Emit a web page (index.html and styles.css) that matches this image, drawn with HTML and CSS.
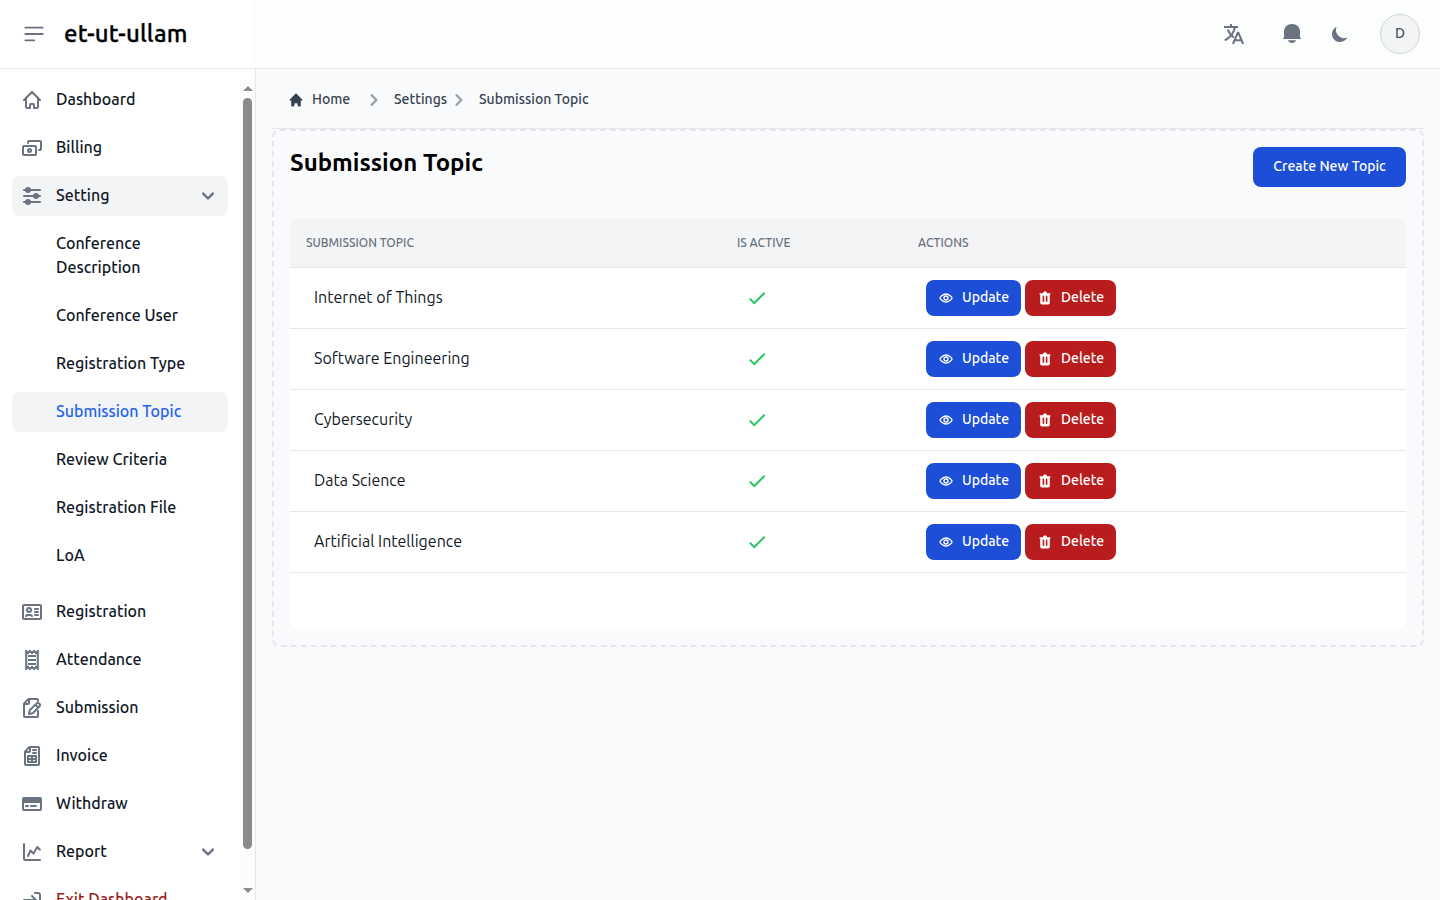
FILE: index.html
```html
<!DOCTYPE html>
<html lang="en">
<head>
    <meta charset="utf-8">
    <meta name="viewport" content="width=device-width, initial-scale=1.0">
    <title>Submission Topic</title>
    <link rel="stylesheet" href="styles.css">
</head>
<body>
    <nav class="navbar">
        <div class="brand">
            <button class="menu-button">
                <svg width="24" height="24" viewBox="0 0 20 20" fill="currentColor"><path fill-rule="evenodd" clip-rule="evenodd" d="M2 4.75A.75.75 0 012.75 4h14.5a.75.75 0 010 1.5H2.75A.75.75 0 012 4.75zm0 10.5a.75.75 0 01.75-.75h7.5a.75.75 0 010 1.5h-7.5a.75.75 0 01-.75-.75zM2 10a.75.75 0 01.75-.75h14.5a.75.75 0 010 1.5H2.75A.75.75 0 012 10z"/></svg>
            </button>
            <span class="brand-name">et-ut-ullam</span>
        </div>
        <div class="nav-actions">
            <svg class="icon-lang" width="20" height="20" viewBox="0 0 20 20" fill="none" stroke="currentColor" stroke-width="2"><path d="M0 3h14M7 0v3M11 3C10 8 6.500 13.500.7 16.300M3.800 5.500C5 9 7 11.500 9.700 13.300"/><path d="m8.900 20 4.800-11.200h.7L19.100 20M10.700 16.300h6.700"/></svg>
            <svg class="icon-bell" width="24" height="24" viewBox="0 0 24 24" fill="currentColor"><path d="M4 15.500V9.500C4 5 7.500 2 12 2s8 3 8 7.500v6c.6.300 1 .7 1 1.100 0 .3-.2.400-.5.400h-17c-.3 0-.5-.1-.5-.4 0-.4.4-.8 1-1.100zM8 18.200h8c-.6 1.800-2 2.800-4 2.800s-3.400-1-4-2.800z"/></svg>
            <svg class="icon-moon" width="20" height="20" viewBox="0 0 20 20" fill="currentColor"><path d="M17.293 13.293A8 8 0 016.707 2.707a8.001 8.001 0 1010.586 10.586z"/></svg>
            <div class="avatar">D</div>
        </div>
    </nav>

    <div class="layout">
        <aside class="sidebar">
            <ul class="menu">
                <li class="menu-item">
                    <svg viewBox="0 0 24 24" class="line"><path d="m4 12 8-8 8 8M6 10.500V19a1 1 0 0 0 1 1h3v-3a1 1 0 0 1 1-1h2a1 1 0 0 1 1 1v3h3a1 1 0 0 0 1-1v-8.500"/></svg>
                    <span>Dashboard</span>
                </li>
                <li class="menu-item">
                    <svg viewBox="0 0 24 24" class="line"><path d="M8 7V6a1 1 0 0 1 1-1h11a1 1 0 0 1 1 1v7a1 1 0 0 1-1 1h-1M3 18v-7a1 1 0 0 1 1-1h11a1 1 0 0 1 1 1v7a1 1 0 0 1-1 1H4a1 1 0 0 1-1-1Zm8-3.500a1.500 1.500 0 1 1-3 0 1.500 1.500 0 0 1 3 0Z"/></svg>
                    <span>Billing</span>
                </li>
                <li class="menu-item active">
                    <svg viewBox="0 0 24 24" class="line sliders"><path d="M4 6h16M4 12h16M4 18h16"/><circle cx="8" cy="6" r="2"/><circle cx="16" cy="12" r="2"/><circle cx="8" cy="18" r="2"/></svg>
                    <span>Setting</span>
                    <svg viewBox="0 0 20 20" class="caret"><path d="M5.293 7.293a1 1 0 011.414 0L10 10.586l3.293-3.293a1 1 0 111.414 1.414l-4 4a1 1 0 01-1.414 0l-4-4a1 1 0 010-1.414z"/></svg>
                </li>
                <li>
                    <ul class="submenu">
                        <li>Conference Description</li>
                        <li>Conference User</li>
                        <li>Registration Type</li>
                        <li class="active current">Submission Topic</li>
                        <li>Review Criteria</li>
                        <li>Registration File</li>
                        <li>LoA</li>
                    </ul>
                </li>
                <li class="menu-item">
                    <svg viewBox="0 0 24 24" class="line"><path d="M15 9h3m-3 3h3m-3 3h3m-6 1c-.306-.613-.933-1-1.618-1H7.618c-.685 0-1.312.387-1.618 1M4 5h16a1 1 0 0 1 1 1v12a1 1 0 0 1-1 1H4a1 1 0 0 1-1-1V6a1 1 0 0 1 1-1Zm7 5a2 2 0 1 1-4 0 2 2 0 0 1 4 0Z"/></svg>
                    <span>Registration</span>
                </li>
                <li class="menu-item">
                    <svg viewBox="0 0 24 24" class="line receipt"><path d="M8 8h8M8 12h8M8 16h8M6.200 2v20M17.800 2v20M6 3l2 2 2-2 2 2 2-2 2 2 2-2M6 21l2-2 2 2 2-2 2 2 2-2 2 2"/></svg>
                    <span>Attendance</span>
                </li>
                <li class="menu-item">
                    <svg viewBox="0 0 24 24" class="line"><path d="M18 5V4a1 1 0 0 0-1-1H8.914a1 1 0 0 0-.707.293L4.293 7.207A1 1 0 0 0 4 7.914V20a1 1 0 0 0 1 1h12a1 1 0 0 0 1-1v-5M9 3v4a1 1 0 0 1-1 1H4m11.383.772 2.745 2.746m1.215-3.906a2.089 2.089 0 0 1 0 2.953l-6.650 6.646L9 17.950l.739-3.692 6.646-6.646a2.087 2.087 0 0 1 2.958 0Z"/></svg>
                    <span>Submission</span>
                </li>
                <li class="menu-item">
                    <svg viewBox="0 0 24 24" class="line"><path d="M10 3v4a1 1 0 0 1-1 1H5m8-2h3m-3 3h3m-4 3v6m4-3H8M19 4v16a1 1 0 0 1-1 1H6a1 1 0 0 1-1-1V7.914a1 1 0 0 1 .293-.707l3.914-3.914A1 1 0 0 1 9.914 3H18a1 1 0 0 1 1 1ZM8 12v6h8v-6H8Z"/></svg>
                    <span>Invoice</span>
                </li>
                <li class="menu-item">
                    <svg viewBox="0 0 24 24" class="line"><path d="M6 14h2m3 0h5M3 7v10a1 1 0 0 0 1 1h16a1 1 0 0 0 1-1V7a1 1 0 0 0-1-1H4a1 1 0 0 0-1 1ZM3 7h18M3 9h18M3 10h18"/></svg>
                    <span>Withdraw</span>
                </li>
                <li class="menu-item">
                    <svg viewBox="0 0 24 24" class="line"><path d="M4 4v15a1 1 0 0 0 1 1h15M8 16l2.500-5.500 3 3L17.273 7 20 9.667"/></svg>
                    <span>Report</span>
                    <svg viewBox="0 0 20 20" class="caret"><path d="M5.293 7.293a1 1 0 011.414 0L10 10.586l3.293-3.293a1 1 0 111.414 1.414l-4 4a1 1 0 01-1.414 0l-4-4a1 1 0 010-1.414z"/></svg>
                </li>
                <li class="menu-item exit">
                    <svg viewBox="0 0 24 24" class="line"><path d="M4 12h12m0 0-4-4m4 4-4 4m3-11h3a2 2 0 0 1 2 2v10a2 2 0 0 1-2 2h-3"/></svg>
                    <span>Exit Dashboard</span>
                </li>
            </ul>
            <div class="scrollbar">
                <i class="arrow-up"></i>
                <i class="thumb"></i>
                <i class="arrow-down"></i>
            </div>
        </aside>

        <main class="content">
            <div class="breadcrumb">
                <svg width="16" height="16" viewBox="0 0 20 20" fill="currentColor"><path d="M10.707 2.293a1 1 0 00-1.414 0l-7 7a1 1 0 001.414 1.414L4 10.414V17a1 1 0 001 1h2a1 1 0 001-1v-2a1 1 0 011-1h2a1 1 0 011 1v2a1 1 0 001 1h2a1 1 0 001-1v-6.586l.293.293a1 1 0 001.414-1.414l-7-7z"/></svg>
                <span class="crumb-first">Home</span>
                <svg class="crumb-sep" viewBox="0 0 20 20"><path d="M7.293 14.707a1 1 0 010-1.414L10.586 10 7.293 6.707a1 1 0 011.414-1.414l4 4a1 1 0 010 1.414l-4 4a1 1 0 01-1.414 0z"/></svg>
                <span class="crumb-second">Settings</span>
                <svg class="crumb-sep" viewBox="0 0 20 20"><path d="M7.293 14.707a1 1 0 010-1.414L10.586 10 7.293 6.707a1 1 0 011.414-1.414l4 4a1 1 0 010 1.414l-4 4a1 1 0 01-1.414 0z"/></svg>
                <span class="crumb-last">Submission Topic</span>
            </div>

            <section class="panel">
                <div class="panel-head">
                    <h1>Submission Topic</h1>
                    <button class="create-button">Create New Topic</button>
                </div>
                <div class="table-card">
                    <table>
                        <thead>
                            <tr>
                                <th class="col-topic">Submission Topic</th>
                                <th class="col-active">Is Active</th>
                                <th>Actions</th>
                            </tr>
                        </thead>
                        <tbody id="topics"></tbody>
                    </table>
                </div>
            </section>
        </main>
    </div>

    <script>
        const topics = [
            'Internet of Things',
            'Software Engineering',
            'Cybersecurity',
            'Data Science',
            'Artificial Intelligence'
        ];

        document.getElementById('topics').innerHTML = topics.map(name => `
            <tr>
                <td><span class="topic">${name}</span></td>
                <td>
                    <svg class="check" width="22" height="22" viewBox="0 0 24 24"><path d="M9 16.170 4.830 12l-1.420 1.410L9 19 21 7l-1.410-1.410z"/></svg>
                </td>
                <td>
                    <div class="row-actions">
                        <button class="update">
                            <svg width="16" height="16" viewBox="0 0 24 24"><path d="M21 12c0 1.200-4.030 6-9 6s-9-4.800-9-6 4.030-6 9-6 9 4.800 9 6Z"/><path d="M15 12a3 3 0 1 1-6 0 3 3 0 0 1 6 0Z"/></svg>
                            <span>Update</span>
                        </button>
                        <button class="delete">
                            <svg width="16" height="16" viewBox="0 0 20 20"><path fill-rule="evenodd" d="M9 2a1 1 0 00-.894.553L7.382 4H4a1 1 0 000 2v10a2 2 0 002 2h8a2 2 0 002-2V6a1 1 0 100-2h-3.382l-.724-1.447A1 1 0 0011 2H9zM7 8a1 1 0 012 0v6a1 1 0 11-2 0V8zm5-1a1 1 0 00-1 1v6a1 1 0 102 0V8a1 1 0 00-1-1z"/></svg>
                            <span>Delete</span>
                        </button>
                    </div>
                </td>
            </tr>`).join('');
    </script>
</body>
</html>
```
FILE: styles.css
```css
* {
    box-sizing: border-box;
}

body {
    margin: 0;
    height: 100vh;
    overflow: hidden;
    display: flex;
    flex-direction: column;
    background: #f9fafb;
    color: #111827;
    font-family: Ubuntu, "Noto Sans", sans-serif;
    font-size: 16px;
    line-height: 24px;
}

ul {
    list-style: none;
    margin: 0;
    padding: 0;
}

button {
    border: none;
    font: inherit;
    cursor: pointer;
}

span {
    white-space: nowrap;
}

.navbar {
    flex: none;
    height: 69px;
    display: flex;
    justify-content: space-between;
    background: #fcfdfd;
    border-bottom: 1px solid #e5e7eb;
}

.brand {
    width: 252px;
    display: flex;
    align-items: center;
    background: #fff;
    padding-left: 22px;
}

.menu-button {
    display: flex;
    padding: 0;
    background: none;
    color: #6b7280;
}

.brand-name {
    margin-left: 18px;
    color: #000;
    font-size: 24px;
    font-weight: 500;
    letter-spacing: 0.2px;
    line-height: 32px;
    -webkit-text-stroke: 0.3px #000;
}

.nav-actions {
    display: flex;
    align-items: center;
    padding-right: 20px;
    color: #6b7280;
}

.icon-bell {
    margin-left: 36px;
}

.icon-moon {
    margin-left: 26px;
}

.avatar {
    width: 40px;
    height: 40px;
    margin-left: 30px;
    border: 1px solid #d1d5db;
    border-radius: 50%;
    background: #f3f4f6;
    color: #4b5563;
    font-size: 14px;
    font-weight: 500;
    line-height: 37px;
    text-align: center;
}

.layout {
    flex: 1;
    min-height: 0;
    display: flex;
}

.sidebar {
    width: 256px;
    flex: none;
    display: flex;
    background: #fff;
    border-right: 1px solid #e5e7eb;
    overflow: hidden;
}

.menu {
    width: 240px;
    padding: 11px 12px;
    font-weight: 500;
}

.menu-item {
    width: 216px;
    height: 40px;
    margin-bottom: 8px;
    padding: 0 8px;
    display: flex;
    align-items: center;
    border-radius: 8px;
}

.menu-item span {
    flex: 1;
    margin: -2px 0 0 12px;
}

.active {
    background: #f3f4f6;
}

.line {
    width: 24px;
    height: 24px;
    fill: none;
    stroke: #6b7280;
    stroke-width: 2;
    stroke-linecap: round;
    stroke-linejoin: round;
}

.sliders {
    fill: #6b7280;
}

.receipt {
    stroke-linecap: butt;
    stroke-linejoin: miter;
}

.caret {
    width: 24px;
    height: 24px;
    fill: #6b7280;
}

.submenu {
    padding-bottom: 8px;
}

.submenu li {
    width: 216px;
    margin-bottom: 8px;
    padding: 7px 50px 9px 44px;
    border-radius: 8px;
}

.submenu li:not(:first-child) {
    padding-right: 0;
}

.submenu .current {
    color: #2563eb;
}

.exit {
    color: #991b1b;
}

.scrollbar {
    width: 15px;
    height: 820px;
    margin-top: 11px;
    padding: 6px 0;
    display: flex;
    flex-direction: column;
    align-items: center;
    background: #fcfcfc;
}

.arrow-up,
.arrow-down {
    border: 5px solid transparent;
}

.arrow-up {
    border-top: 0;
    border-bottom: 5px solid #8b8b8b;
}

.arrow-down {
    margin-top: 39px;
    border-bottom: 0;
    border-top: 5px solid #8b8b8b;
}

.thumb {
    width: 9px;
    height: 751px;
    margin-top: 7px;
    border-radius: 5px;
    background: #8b8b8b;
}

.content {
    flex: 1;
    padding: 0 16px;
}

.breadcrumb {
    height: 60px;
    padding: 2px 0 0 16px;
    display: flex;
    align-items: center;
    border-bottom: 1px solid #e5e7eb;
    color: #374151;
    font-size: 14px;
    font-weight: 500;
}

.breadcrumb span {
    margin-top: -2px;
}

.crumb-first {
    width: 38px;
    margin-left: 8px;
}

.crumb-second {
    width: 53px;
    margin-left: 8px;
}

.crumb-last {
    margin-left: 8px;
}

.crumb-sep {
    width: 24px;
    height: 24px;
    fill: #9ca3af;
}

.crumb-first + .crumb-sep {
    margin-left: 12px;
}

.panel {
    height: 518px;
    border: 2px dashed #e5e7eb;
    border-radius: 8px;
    padding: 16px;
}

.panel-head {
    display: flex;
    justify-content: space-between;
}

h1 {
    margin: 0;
    color: #000;
    font-size: 24px;
    font-weight: 600;
    line-height: 32px;
}

.create-button {
    width: 153px;
    height: 40px;
    padding: 0 0 2px;
    border-radius: 8px;
    background: #1d4ed8;
    color: #fff;
    font-size: 14px;
    font-weight: 500;
}

.table-card {
    height: 410px;
    margin-top: 32px;
    border-radius: 8px;
    background: #fff;
    overflow: hidden;
}

table {
    width: 100%;
    table-layout: fixed;
    border-collapse: collapse;
}

th {
    height: 48px;
    padding: 0 16px;
    background: #f3f4f6;
    border-bottom: 1px solid #e5e7eb;
    color: #6b7280;
    font-size: 12px;
    font-weight: 500;
    text-align: left;
    text-transform: uppercase;
}

.col-topic {
    width: 431px;
}

.col-active {
    width: 181px;
}

td {
    height: 61px;
    padding: 0 24px;
    border-bottom: 1px solid #e5e7eb;
}

.topic {
    display: block;
    margin-top: -2px;
}

.check {
    display: block;
    margin-left: 1px;
    fill: #22c55e;
}

.row-actions {
    display: flex;
    gap: 4px;
}

.row-actions button {
    height: 36px;
    padding: 0 0 0 12px;
    display: flex;
    align-items: center;
    border-radius: 8px;
    color: #fff;
    font-size: 14px;
    font-weight: 500;
}

.row-actions span {
    margin: -2px 0 0 8px;
}

.update {
    width: 95px;
    background: #1d4ed8;
}

.update svg {
    fill: none;
    stroke: #fff;
    stroke-width: 2;
}

.delete {
    width: 91px;
    background: #b91c1c;
}

.delete svg {
    fill: #fff;
}
```
